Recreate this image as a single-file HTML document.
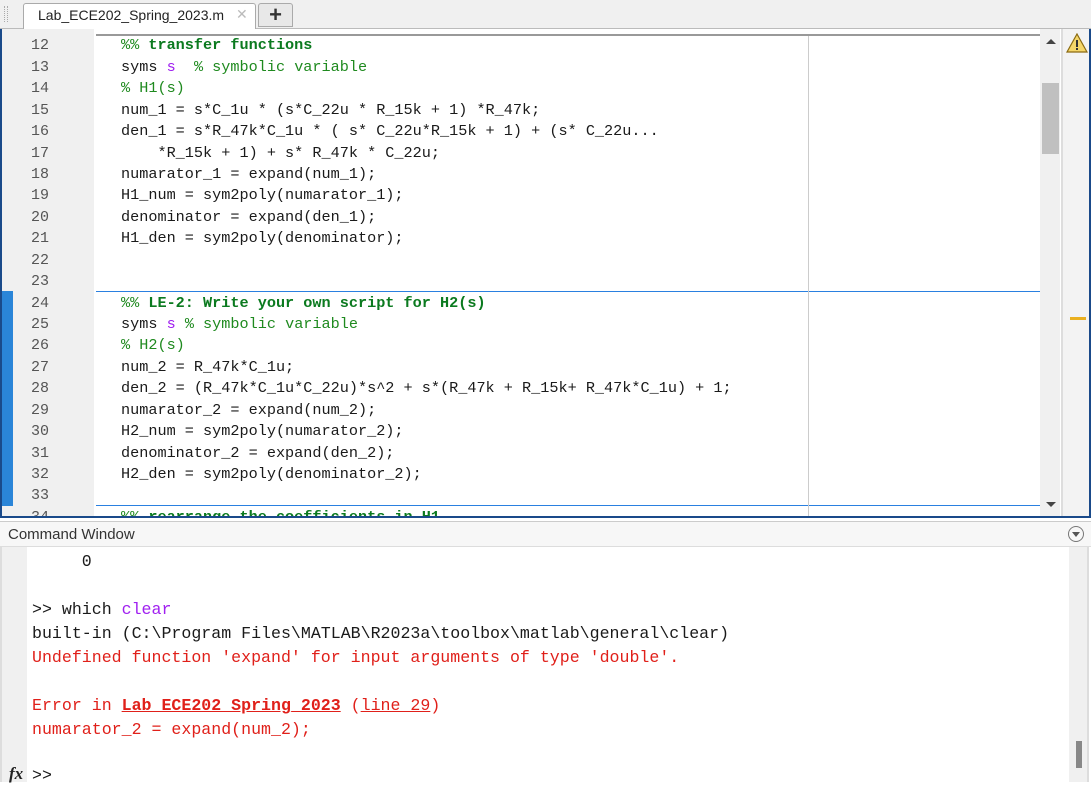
<!DOCTYPE html>
<html><head><meta charset="utf-8"><style>
*{margin:0;padding:0;box-sizing:border-box}
body{width:1091px;height:782px;overflow:hidden;background:#fff;position:relative;font-family:"Liberation Sans",sans-serif}
.abs{position:absolute}
.ln{position:absolute;left:0;width:49px;text-align:right;font-family:"Liberation Mono",monospace;font-size:15px;color:#555}
.cl{position:absolute;left:121px;font-family:"Liberation Mono",monospace;font-size:15.2px;color:#1a1a1a;white-space:pre}
.g{color:#1f8a1f}.gb{color:#0b7a1f;font-weight:bold}.p{color:#a020f0}
.cw{position:absolute;left:32px;font-family:"Liberation Mono",monospace;font-size:16.6px;color:#1a1a1a;white-space:pre}
.r{color:#e0201a}
</style></head><body>
<div class="abs" style="left:0;top:0;width:1091px;height:29px;background:#f0f0f0;border-bottom:1px solid #bbb"></div>
<div class="abs" style="left:4px;top:6px;width:4px;height:16px;border-left:1px dotted #aaa;border-right:1px dotted #aaa"></div>
<div class="abs" style="left:23px;top:3px;width:233px;height:27px;background:#fff;border:1px solid #aaa;border-bottom:none;border-radius:3px 3px 0 0"></div>
<div class="abs" style="left:38px;top:7px;font-size:14px;color:#222">Lab_ECE202_Spring_2023.m</div>
<div class="abs" style="left:236px;top:6px;font-size:14px;color:#bbb">✕</div>
<div class="abs" style="left:258px;top:3px;width:35px;height:24px;background:#e8e8e8;border:1px solid #aaa;border-radius:3px 3px 0 0;text-align:center;font-size:22px;line-height:22px;color:#333;font-weight:bold">+</div>
<div class="abs" style="left:0;top:29px;width:1091px;height:489px;border:2px solid #1a4a8a;border-top:none;background:#fff;overflow:hidden">
 <div class="abs" style="left:0;top:0;width:92px;height:487px;background:#f0f0f0"></div>
 <div class="abs" style="left:0;top:262px;width:11px;height:215px;background:#2a85d8"></div>
 <div class="abs" style="left:94px;top:5px;width:944px;height:2px;background:#999"></div>
 <div class="abs" style="left:94px;top:262px;width:944px;height:1px;background:#2a80e0"></div>
 <div class="abs" style="left:94px;top:476px;width:944px;height:1px;background:#2a80e0"></div>
 <div class="abs" style="left:806px;top:7px;width:1px;height:480px;background:#ccc"></div>
 <div class="abs" style="left:1038px;top:0;width:20px;height:487px;background:#f0f0f0"></div>
 <div class="abs" style="left:1040px;top:54px;width:17px;height:71px;background:#c0c0c0"></div>
 <div class="abs" style="left:1044px;top:10px;width:0;height:0;border-left:5px solid transparent;border-right:5px solid transparent;border-bottom:5px solid #444"></div>
 <div class="abs" style="left:1044px;top:473px;width:0;height:0;border-left:5px solid transparent;border-right:5px solid transparent;border-top:5px solid #444"></div>
 <div class="abs" style="left:1059px;top:0;width:30px;height:487px;background:#f3f3f3;border-left:2px solid #ddd"></div>
 <svg class="abs" style="left:1064px;top:4px" width="22" height="20"><polygon points="11,1 21,19 1,19" fill="#f5d76a" stroke="#8a6a10" stroke-width="1.2"/><rect x="10" y="7" width="2" height="7" fill="#333"/><rect x="10" y="15" width="2" height="2" fill="#333"/></svg>
 <div class="abs" style="left:1068px;top:288px;width:16px;height:3px;background:#eab020"></div>
</div>
<div class="ln" style="top:37px">12</div><div class="cl" style="top:36px"><span class="g">%% </span><span class="gb">transfer functions</span></div>
<div class="ln" style="top:59px">13</div><div class="cl" style="top:58px">syms <span class="p">s</span>  <span class="g">% symbolic variable</span></div>
<div class="ln" style="top:80px">14</div><div class="cl" style="top:79px"><span class="g">% H1(s)</span></div>
<div class="ln" style="top:102px">15</div><div class="cl" style="top:101px">num_1 = s*C_1u * (s*C_22u * R_15k + 1) *R_47k;</div>
<div class="ln" style="top:123px">16</div><div class="cl" style="top:122px">den_1 = s*R_47k*C_1u * ( s* C_22u*R_15k + 1) + (s* C_22u...</div>
<div class="ln" style="top:145px">17</div><div class="cl" style="top:144px">    *R_15k + 1) + s* R_47k * C_22u;</div>
<div class="ln" style="top:166px">18</div><div class="cl" style="top:165px">numarator_1 = expand(num_1);</div>
<div class="ln" style="top:187px">19</div><div class="cl" style="top:186px">H1_num = sym2poly(numarator_1);</div>
<div class="ln" style="top:209px">20</div><div class="cl" style="top:208px">denominator = expand(den_1);</div>
<div class="ln" style="top:230px">21</div><div class="cl" style="top:229px">H1_den = sym2poly(denominator);</div>
<div class="ln" style="top:252px">22</div>
<div class="ln" style="top:273px">23</div>
<div class="ln" style="top:295px">24</div><div class="cl" style="top:294px"><span class="g">%% </span><span class="gb">LE-2: Write your own script for H2(s)</span></div>
<div class="ln" style="top:316px">25</div><div class="cl" style="top:315px">syms <span class="p">s</span> <span class="g">% symbolic variable</span></div>
<div class="ln" style="top:337px">26</div><div class="cl" style="top:336px"><span class="g">% H2(s)</span></div>
<div class="ln" style="top:359px">27</div><div class="cl" style="top:358px">num_2 = R_47k*C_1u;</div>
<div class="ln" style="top:380px">28</div><div class="cl" style="top:379px">den_2 = (R_47k*C_1u*C_22u)*s^2 + s*(R_47k + R_15k+ R_47k*C_1u) + 1;</div>
<div class="ln" style="top:402px">29</div><div class="cl" style="top:401px">numarator_2 = expand(num_2);</div>
<div class="ln" style="top:423px">30</div><div class="cl" style="top:422px">H2_num = sym2poly(numarator_2);</div>
<div class="ln" style="top:445px">31</div><div class="cl" style="top:444px">denominator_2 = expand(den_2);</div>
<div class="ln" style="top:466px">32</div><div class="cl" style="top:465px">H2_den = sym2poly(denominator_2);</div>
<div class="ln" style="top:487px">33</div>
<div class="abs" style="left:0;top:507px;width:1040px;height:9px;overflow:hidden">
 <div class="ln" style="top:2px">34</div><div class="cl" style="top:1px"><span class="g">%% </span><span class="gb">rearrange the coefficients in H1</span></div>
</div>
<div class="abs" style="left:0;top:516px;width:1091px;height:2px;background:#1a4a8a"></div>
<div class="abs" style="left:0;top:521px;width:1091px;height:26px;background:#f7f7f7;border-top:1px solid #ccc;border-bottom:1px solid #ddd"></div>
<div class="abs" style="left:8px;top:526px;font-size:15px;color:#333">Command Window</div>
<div class="abs" style="left:1068px;top:526px;width:16px;height:16px;border:1.5px solid #777;border-radius:50%"></div>
<div class="abs" style="left:1072px;top:532px;width:0;height:0;border-left:4px solid transparent;border-right:4px solid transparent;border-top:5px solid #555"></div>
<div class="abs" style="left:0;top:547px;width:27px;height:235px;background:#f0f0f0;border-left:2px solid #ddd"></div>
<div class="abs" style="left:1069px;top:547px;width:20px;height:235px;background:#f0f0f0;border-right:2px solid #ddd"></div>
<div class="abs" style="left:1076px;top:741px;width:6px;height:27px;background:#888"></div>
<div class="cw" style="top:552px">     0</div>
<div class="cw" style="top:600px">&gt;&gt; which <span class="p">clear</span></div>
<div class="cw" style="top:624px">built-in (C:\Program Files\MATLAB\R2023a\toolbox\matlab\general\clear)</div>
<div class="cw r" style="top:648px">Undefined function 'expand' for input arguments of type 'double'.</div>
<div class="cw r" style="top:696px">Error in <b style="text-decoration:underline">Lab_ECE202_Spring_2023</b> (<u>line 29</u>)</div>
<div class="cw r" style="top:720px">numarator_2 = expand(num_2);</div>
<div class="abs" style="left:9px;top:764px;font-family:'Liberation Serif',serif;font-style:italic;font-weight:bold;font-size:17px;color:#222">fx</div>
<div class="cw" style="top:766px">&gt;&gt;</div>
</body></html>
